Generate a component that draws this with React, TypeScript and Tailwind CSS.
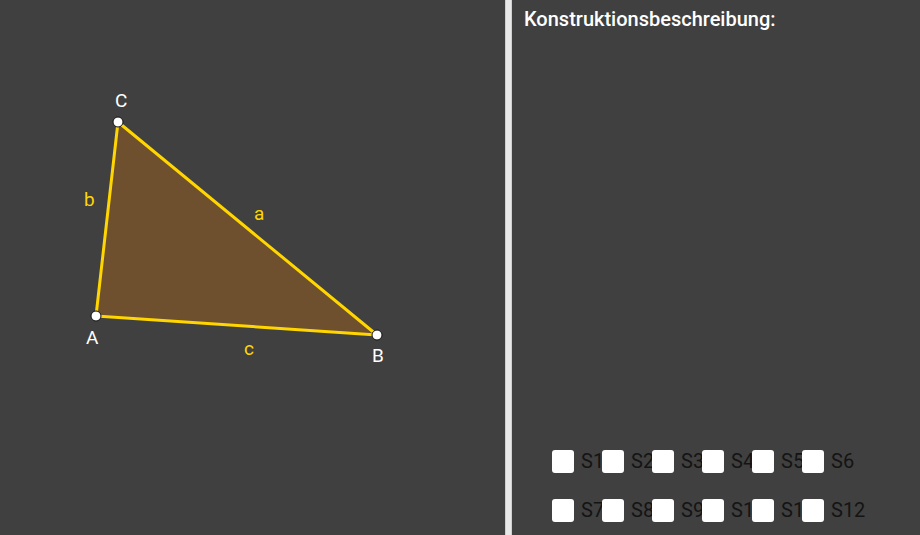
const rows = [
  ["S1", "S2", "S3", "S4", "S5", "S6"],
  ["S7", "S8", "S9", "S10", "S11", "S12"],
]

const A = { x: 96, y: 316 }
const B = { x: 377, y: 335 }
const C = { x: 118, y: 122 }

function Triangle() {
  return (
    <svg width="505" height="535" className="block">
      <polygon
        points={`${A.x},${A.y} ${B.x},${B.y} ${C.x},${C.y}`}
        fill="#6e4f2e"
        stroke="#ffd600"
        strokeWidth="3"
        strokeLinejoin="round"
      />
      {[A, B, C].map((p, i) => (
        <circle key={i} cx={p.x} cy={p.y} r="5" fill="#ffffff" stroke="#111111" strokeWidth="1" />
      ))}
      <g fontFamily="Roboto, 'Liberation Sans', sans-serif" fontSize="19">
        <text x="115" y="107" fill="#ffffff">C</text>
        <text x="86" y="344" fill="#ffffff">A</text>
        <text x="372" y="362" fill="#ffffff">B</text>
        <text x="254" y="220" fill="#ffd600">a</text>
        <text x="84" y="206" fill="#ffd600">b</text>
        <text x="244" y="355" fill="#ffd600">c</text>
      </g>
    </svg>
  )
}

export default function App() {
  return (
    <div className="flex w-[920px] h-[535px] bg-[#404040] overflow-hidden font-['Roboto','Liberation_Sans',sans-serif]">
      <div className="w-[505px] shrink-0">
        <Triangle />
      </div>
      <div className="w-[7px] shrink-0 bg-[#e8e8e8] border-x border-[#cfcfcf]" />
      <div className="flex-1 flex flex-col pl-[12px] pt-[5px]">
        <h2 className="text-white text-[20px] font-medium leading-[28px]">Konstruktionsbeschreibung:</h2>
        <div className="mt-auto mb-[13px] pl-[28px] flex flex-col gap-[25px]">
          {rows.map((row, r) => (
            <div key={r} className="flex">
              {row.map((s) => (
                <div key={s} className="w-[50px] shrink-0 flex items-center gap-[7px]">
                  <span className="w-[22px] h-[23px] shrink-0 bg-white rounded-[3px]" />
                  <span className="text-[20px] leading-[24px] text-[#141414] whitespace-nowrap">{s}</span>
                </div>
              ))}
            </div>
          ))}
        </div>
      </div>
    </div>
  )
}
